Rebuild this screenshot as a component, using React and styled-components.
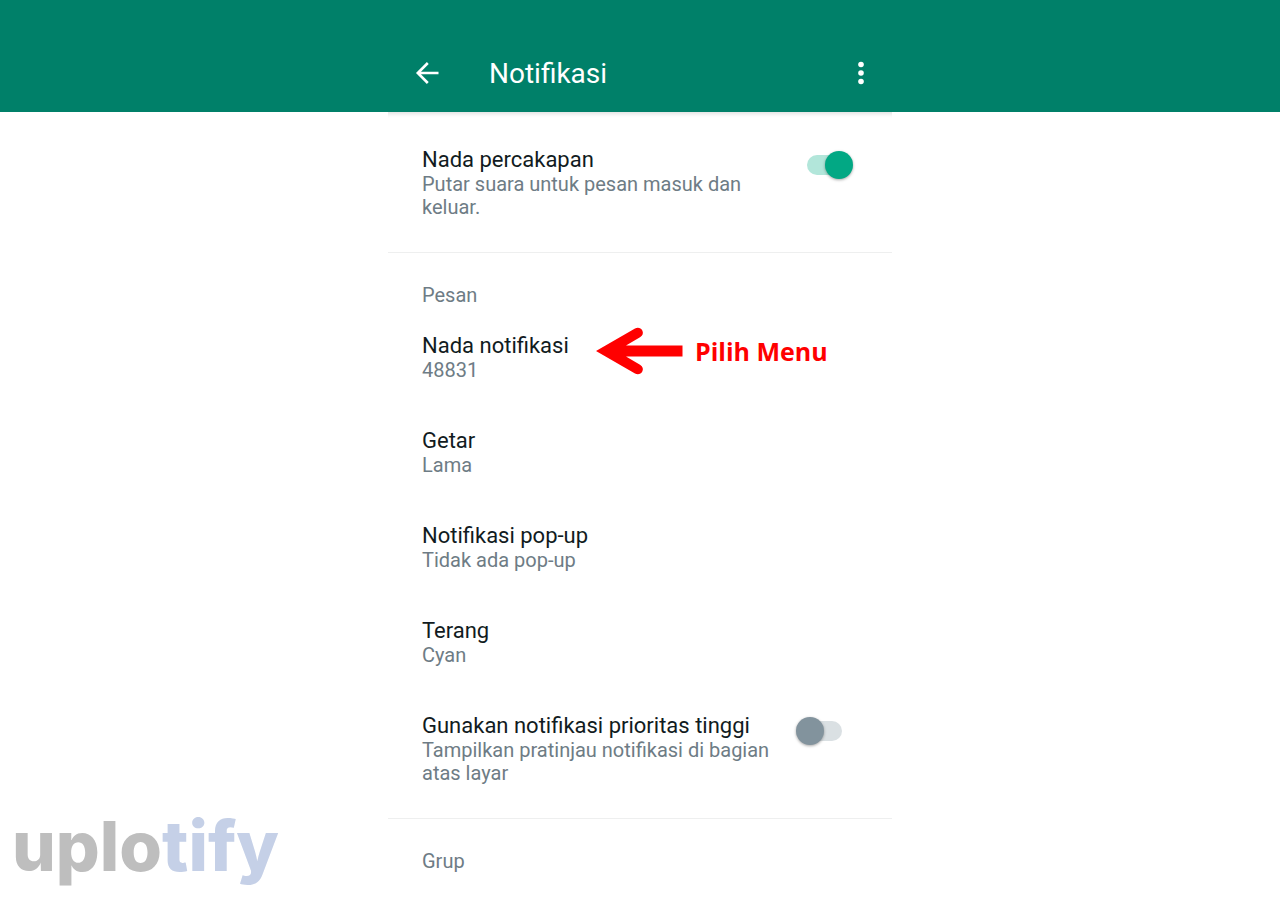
import React, { useState } from 'react';
import styled, { createGlobalStyle } from 'styled-components';

const GlobalStyle = createGlobalStyle`
    * {
        box-sizing: border-box;
    }

    body {
        margin: 0;
        background-color: #ffffff;
        font-family: Roboto, 'Liberation Sans', sans-serif;
    }
`;

const Page = styled.div`
    position: relative;
    min-height: 100vh;
`;

// Green bar across the whole window
const TopBar = styled.header`
    background-color: #008069;
    height: 112px;
    padding-top: 34px;
`;

const TopBarContent = styled.div`
    display: flex;
    align-items: center;
    max-width: 504px;
    height: 78px;
    margin: 0 auto;
    padding: 0 16px 0 24px;
`;

const IconButton = styled.button`
    display: flex;
    align-items: center;
    justify-content: center;
    width: 30px;
    height: 40px;
    padding: 0;
    border: none;
    background: none;
    color: #ffffff;
    cursor: pointer;
`;

const PageTitle = styled.h1`
    flex: 1;
    margin: 0 0 0 47px;
    color: #ffffff;
    font-size: 28px;
    font-weight: 400;
    line-height: 41px;
`;

const Screen = styled.main`
    max-width: 504px;
    margin: 0 auto;
    box-shadow: inset 0 6px 4px -4px rgba(0, 0, 0, 0.12); /* Shadow cast by the bar */
`;

const Section = styled.section`
    display: flex;
    flex-direction: column;
    gap: 45px;
    padding: 34px 34px 33px;

    & + & {
        border-top: 1px solid #eeefef;
        padding-top: 31px;
    }
`;

const SectionTitle = styled.h2`
    margin: 0 0 -20px; /* The heading sits closer to its first row */
    color: #6e7c85;
    font-size: 20px;
    font-weight: 400;
    line-height: 23px;
`;

const Row = styled.div`
    position: relative;
    display: flex;
    align-items: flex-start;
    justify-content: space-between;
    padding-right: ${(props) => props.$inset || 0}px;
`;

const RowText = styled.div`
    max-width: 350px;
`;

const RowTitle = styled.label`
    display: block;
    color: #111b21;
    font-size: 22px;
    line-height: 27px;
`;

const RowDetail = styled.p`
    margin: 0;
    color: #6e7c85;
    font-size: 20px;
    line-height: 23px;
`;

const Switch = styled.input`
    appearance: none;
    position: relative;
    flex-shrink: 0;
    width: 46px;
    height: 28px;
    margin: 5px 0 0;
    cursor: pointer;

    /* Track */
    &::before {
        content: '';
        position: absolute;
        top: 4px;
        left: 4px;
        right: 0;
        height: 20px;
        border-radius: 10px;
        background-color: #dae0e3;
    }

    /* Thumb */
    &::after {
        content: '';
        position: absolute;
        top: 0;
        left: 0;
        width: 28px;
        height: 28px;
        border-radius: 50%;
        background-color: #82939d;
        box-shadow: 0 1px 3px rgba(0, 0, 0, 0.35);
    }

    &:checked::before {
        left: 0;
        right: 4px;
        background-color: #b2e6da;
    }

    &:checked::after {
        left: auto;
        right: 0;
        background-color: #02a884;
    }
`;

// Red hint that lies over the row it points at
const Hint = styled.div`
    position: absolute;
    top: -5px;
    left: 173px;
    display: flex;
    align-items: center;
    gap: 12px;
    color: #ff0000;
    font-family: 'Open Sans', 'Noto Sans', sans-serif;
    font-size: 25px;
    font-weight: 700;
    line-height: 48px;
    white-space: nowrap;
`;

const Watermark = styled.div`
    position: absolute;
    left: 12px;
    bottom: 12px;
    color: #bebebe;
    font-family: Inter, sans-serif;
    font-size: 69px;
    font-weight: 800;
    line-height: 80px;
    pointer-events: none;
`;

const WatermarkAccent = styled.span`
    color: #c5d0e7;
`;

const BackIcon = () => (
    <svg width="24" height="24" viewBox="0 0 24 24" fill="none" stroke="currentColor" strokeWidth="2.6">
        <path d="M23.500 12H3M12.800 2L2.800 12L12.800 22" />
    </svg>
);

const MoreIcon = () => (
    <svg width="8" height="24" viewBox="0 0 8 24" fill="currentColor">
        <circle cx="4" cy="3.500" r="2.800" />
        <circle cx="4" cy="12" r="2.800" />
        <circle cx="4" cy="20.500" r="2.800" />
    </svg>
);

const ArrowIcon = () => (
    <svg width="88" height="48" viewBox="0 0 88 48" fill="currentColor">
        <path d="M1 24L40 1.500C43 0 46 1 47.300 3.500C48.500 6 48 8.500 45 10.300L31 18.500H87.500V29.500H31L45 37.700C48 39.500 48.500 42 47.300 44.500C46 47 43 48 40 46.500Z" />
    </svg>
);

const messageRows = [
    { id: 'nada', title: 'Nada notifikasi', detail: '48831', hint: 'Pilih Menu' },
    { id: 'getar', title: 'Getar', detail: 'Lama' },
    { id: 'popup', title: 'Notifikasi pop-up', detail: 'Tidak ada pop-up' },
    { id: 'terang', title: 'Terang', detail: 'Cyan' },
];

const App = () => {
    const [chatSound, setChatSound] = useState(true);
    const [highPriority, setHighPriority] = useState(false);

    return (
        <Page>
            <GlobalStyle />
            <TopBar>
                <TopBarContent>
                    <IconButton aria-label="Kembali">
                        <BackIcon />
                    </IconButton>
                    <PageTitle>Notifikasi</PageTitle>
                    <IconButton aria-label="Opsi lainnya">
                        <MoreIcon />
                    </IconButton>
                </TopBarContent>
            </TopBar>
            <Screen>
                <Section>
                    <Row $inset={5}>
                        <RowText>
                            <RowTitle htmlFor="chat-sound">Nada percakapan</RowTitle>
                            <RowDetail>Putar suara untuk pesan masuk dan keluar.</RowDetail>
                        </RowText>
                        <Switch
                            id="chat-sound"
                            type="checkbox"
                            checked={chatSound}
                            onChange={() => setChatSound(!chatSound)}
                        />
                    </Row>
                </Section>
                <Section>
                    <SectionTitle>Pesan</SectionTitle>
                    {messageRows.map((row) => (
                        <Row key={row.id}>
                            <RowText>
                                <RowTitle as="div">{row.title}</RowTitle>
                                <RowDetail>{row.detail}</RowDetail>
                            </RowText>
                            {row.hint && (
                                <Hint>
                                    <ArrowIcon />
                                    {row.hint}
                                </Hint>
                            )}
                        </Row>
                    ))}
                    <Row $inset={16}>
                        <RowText>
                            <RowTitle htmlFor="high-priority">Gunakan notifikasi prioritas tinggi</RowTitle>
                            <RowDetail>Tampilkan pratinjau notifikasi di bagian atas layar</RowDetail>
                        </RowText>
                        <Switch
                            id="high-priority"
                            type="checkbox"
                            checked={highPriority}
                            onChange={() => setHighPriority(!highPriority)}
                        />
                    </Row>
                </Section>
                <Section>
                    <SectionTitle>Grup</SectionTitle>
                </Section>
            </Screen>
            <Watermark>
                uplo<WatermarkAccent>tify</WatermarkAccent>
            </Watermark>
        </Page>
    );
};

export default App;
